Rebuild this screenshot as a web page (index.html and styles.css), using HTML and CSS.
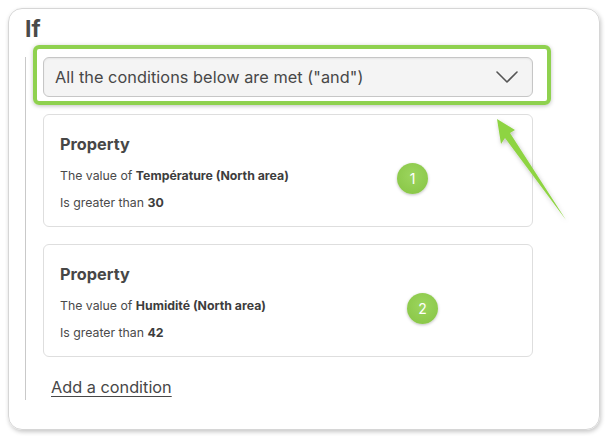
FILE: index.html
```html
<!DOCTYPE html>
<html>
<head>
<meta charset="utf-8">
<link rel="stylesheet" href="styles.css">
</head>
<body>
<div class="panel">
  <h2 class="title">If</h2>
  <div class="group">
    <div class="select">
      <span>All the conditions below are met ("and")</span>
      <svg class="chevron" width="22" height="12" viewBox="0 0 22 12"><path d="M1 1 L11 11 L21 1" fill="none" stroke="#555" stroke-width="1.6" stroke-linecap="round" stroke-linejoin="round"/></svg>
    </div>
    <div class="card">
      <h3>Property</h3>
      <p>The value of <b>Température (North area)</b></p>
      <p>Is greater than <b>30</b></p>
      <span class="badge b1">1</span>
    </div>
    <div class="card">
      <h3>Property</h3>
      <p>The value of <b>Humidité (North area)</b></p>
      <p>Is greater than <b>42</b></p>
      <span class="badge b2">2</span>
    </div>
    <a class="add" href="#">Add a condition</a>
  </div>
  <div class="highlight"></div>
  <svg class="arrow" width="100" height="130" viewBox="0 0 100 130">
    <defs>
      <filter id="sh" x="-30%" y="-30%" width="160%" height="160%">
        <feDropShadow dx="1" dy="2" stdDeviation="2" flood-color="#000" flood-opacity="0.25"/>
      </filter>
    </defs>
    <path d="M17 19 L35 30 L30 33 L86 120 L25 38 L21 44 Z" fill="#8ed443" filter="url(#sh)"/>
  </svg>
</div>
</body>
</html>
```

FILE: styles.css
```css
* { box-sizing: border-box; }
html, body { margin: 0; background: #fff; }
body {
  padding: 8px;
  font-family: Inter, "Noto Sans", sans-serif;
  color: #4a4a4a;
}
.panel {
  position: relative;
  width: 592px;
  height: 422px;
  border: 1px solid #d6d6d6;
  border-radius: 14px;
  box-shadow: 1px 2px 4px rgba(0,0,0,0.22);
  padding: 6px 0 0 16px;
}
.title {
  margin: 0;
  font-size: 23px;
  line-height: 28px;
  font-weight: 700;
  color: #4a4a4a;
}
.group {
  margin-top: 14px;
  width: 508px;
  border-left: 1px solid #c9c9c9;
  padding-left: 17px;
  padding-bottom: 2px;
  display: flex;
  flex-direction: column;
  gap: 17px;
}
.select {
  height: 40px;
  border: 1px solid #c6c6c6;
  border-radius: 6px;
  background: #f4f4f4;
  box-shadow: inset 0 1px 2px rgba(0,0,0,0.06);
  display: flex;
  align-items: center;
  justify-content: space-between;
  padding: 0 14px 0 11px;
  font-size: 16.3px;
  letter-spacing: 0.05px;
  color: #474747;
}
.chevron { display: block; }
.card {
  position: relative;
  height: 113px;
  border: 1px solid #dedede;
  border-radius: 6px;
  padding: 19px 17px 0 16px;
}
.card h3 {
  margin: 0 0 14px;
  font-size: 16.3px;
  line-height: 20px;
  font-weight: 650;
  color: #474747;
}
.card p {
  margin: 0 0 11px;
  font-size: 12.3px;
  line-height: 16px;
  color: #4a4a4a;
}
.card b { font-weight: 650; color: #3d3d3d; }
.badge {
  position: absolute;
  top: 48px;
  width: 31px;
  height: 31px;
  border-radius: 50%;
  background: radial-gradient(circle at 50% 40%, #9cd55e, #86c443);
  box-shadow: 0 1px 3px rgba(0,0,0,0.25);
  color: #fff;
  font-size: 14px;
  line-height: 31px;
  text-align: center;
}
.b1 { left: 353px; }
.b2 { left: 363px; }
.add {
  margin: 2px 0 0 8px;
  align-self: flex-start;
  font-size: 16.3px;
  line-height: 22px;
  color: #474747;
  text-decoration: underline;
  text-underline-offset: 3px;
  text-decoration-thickness: 1px;
}
.highlight {
  position: absolute;
  left: 24px;
  top: 36px;
  width: 518px;
  height: 60px;
  border: 4px solid #8fd14f;
  border-radius: 6px;
  box-shadow: 0 1px 4px rgba(0,0,0,0.25);
}
.arrow {
  position: absolute;
  left: 471px;
  top: 91px;
}
```
